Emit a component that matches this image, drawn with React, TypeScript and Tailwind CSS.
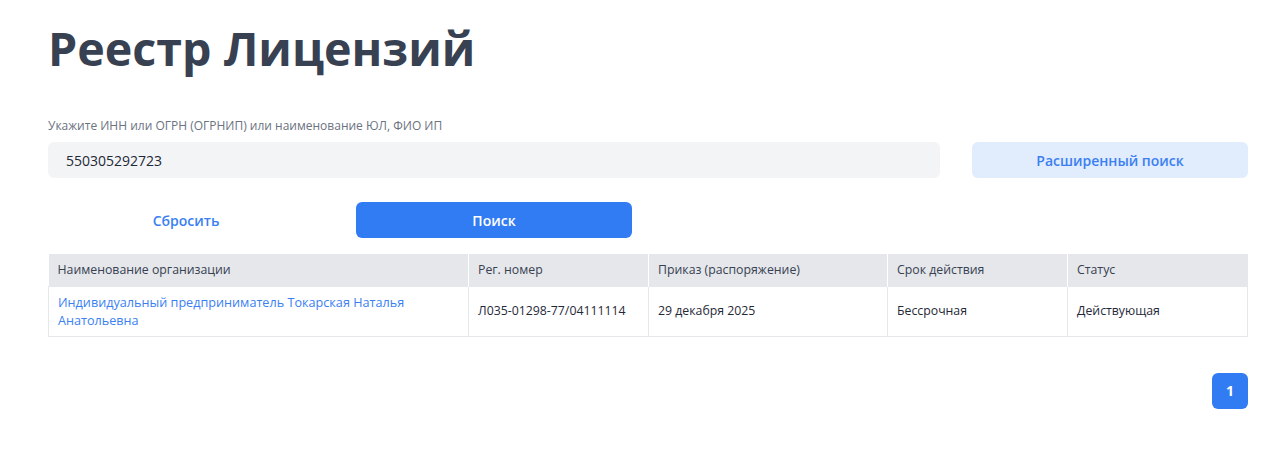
export default function App() {
  const font = { fontFamily: '"Open Sans", "Noto Sans", sans-serif' };
  return (
    <div className="min-h-[450px] bg-white pt-[20px]" style={font}>
      <div className="ml-12 w-[1200px]">
        <h1 className="text-[46.6px] font-bold leading-[56px] text-[#374151]">Реестр Лицензий</h1>
        <div className="mt-[42px] text-[12px] leading-[16px] text-[#6b7280]">
          Укажите ИНН или ОГРН (ОГРНИП) или наименование ЮЛ, ФИО ИП
        </div>
        <div className="mt-[8px] grid grid-cols-4 gap-x-8 gap-y-6">
          <div className="col-span-3 flex h-9 items-center rounded-md bg-[#f3f4f6] px-[18px] text-[14px] text-[#1f2937]">
            550305292723
          </div>
          <button className="h-9 rounded-md bg-[#e1ecfd] text-[14px] font-semibold text-[#3b7ff2]">
            Расширенный поиск
          </button>
          <button className="h-9 rounded-md text-[14px] font-semibold text-[#3b7ff2]">Сбросить</button>
          <button className="h-9 rounded-md bg-[#317cf2] text-[14px] font-semibold text-white">Поиск</button>
        </div>
        <table className="mt-4 w-full border-collapse text-[12.3px]">
          <thead>
            <tr className="bg-[#e5e7eb] text-left text-[#374151]">
              <th className="h-8 w-[420px] border-r border-white px-[9px] font-normal">Наименование организации</th>
              <th className="w-[180px] border-r border-white px-[9px] font-normal">Рег. номер</th>
              <th className="w-[239px] border-r border-white px-[9px] font-normal">Приказ (распоряжение)</th>
              <th className="w-[180px] border-r border-white px-[9px] font-normal">Срок действия</th>
              <th className="px-[9px] font-normal">Статус</th>
            </tr>
          </thead>
          <tbody>
            <tr className="text-[#1f2937]">
              <td className="h-[50px] border border-[#e5e7eb] px-[9px] text-[12.65px] leading-[18px] text-[#3b7ff2]">
                Индивидуальный предприниматель Токарская Наталья Анатольевна
              </td>
              <td className="border border-[#e5e7eb] px-[9px]">Л035-01298-77/04111114</td>
              <td className="border border-[#e5e7eb] px-[9px]">29 декабря 2025</td>
              <td className="border border-[#e5e7eb] px-[9px]">Бессрочная</td>
              <td className="border border-[#e5e7eb] px-[9px]">Действующая</td>
            </tr>
          </tbody>
        </table>
        <div className="mt-9 flex justify-end">
          <button className="h-9 w-9 rounded-md bg-[#317cf2] text-[14px] font-bold text-white">1</button>
        </div>
      </div>
    </div>
  );
}
